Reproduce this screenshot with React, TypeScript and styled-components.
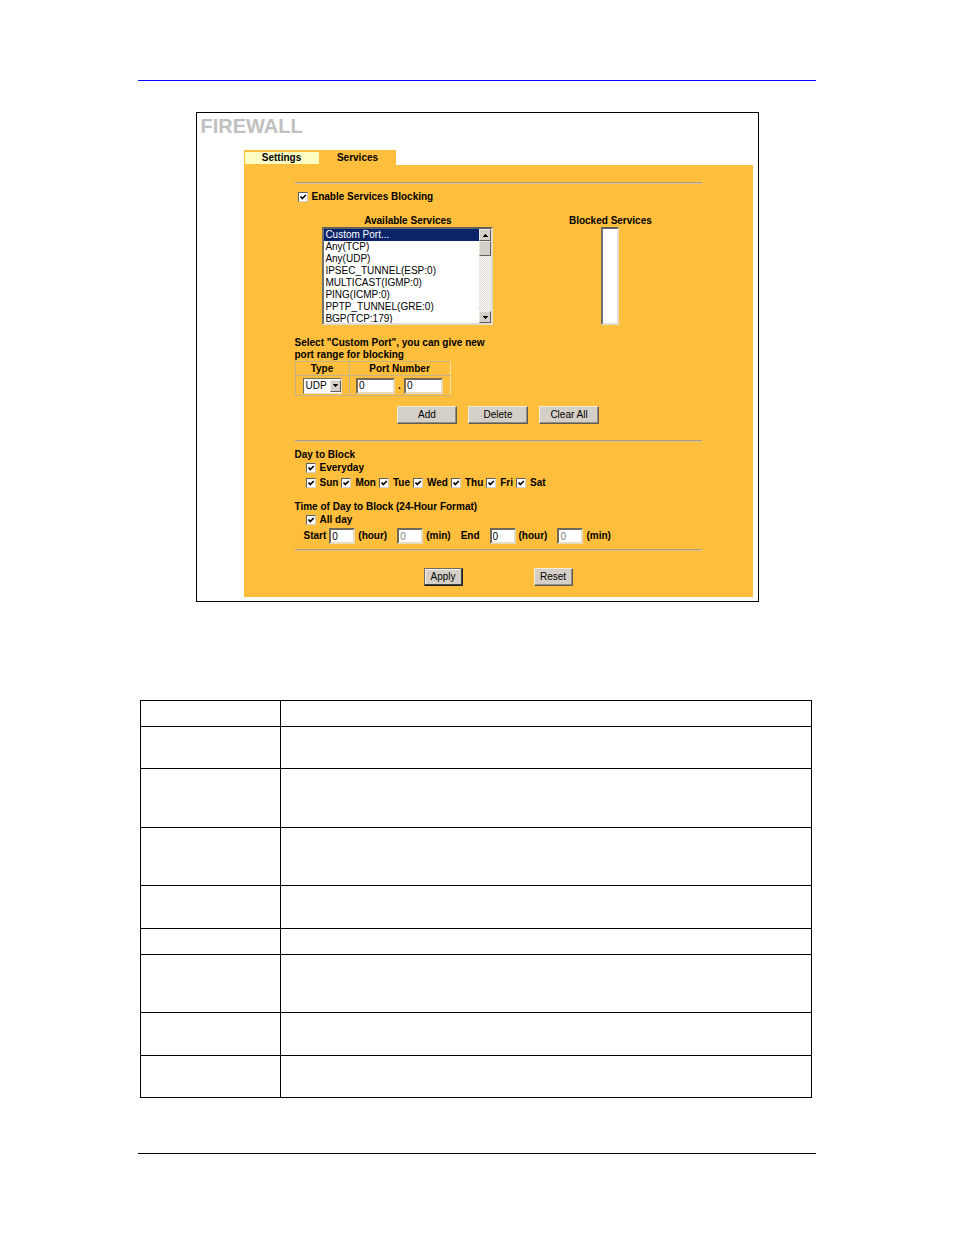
import React, { useState } from 'react';
import styled, { createGlobalStyle } from 'styled-components';

const GlobalStyle = createGlobalStyle`
  * {
    box-sizing: border-box;
  }

  body {
    margin: 0;
    background: #fff;
    color: #000;
    font-family: 'Liberation Sans', Arial, sans-serif;
    font-size: 10px;
    line-height: 12px;
  }

  button, input, select {
    font-family: inherit;
    font-size: 10px;
    line-height: 12px;
    color: #000;
    margin: 0;
    border-radius: 0;
  }
`;

const Page = styled.main`
  max-width: 678px;
  margin: 0 auto;
  padding: 80px 0;
`;

const PageRule = styled.hr<{ $color: string }>`
  height: 1px;
  margin: 0;
  border: none;
  background: ${({ $color }) => $color};
`;

const Frame = styled.section`
  max-width: 563px;
  margin: 31px auto 98px;
  padding: 1px 5px 4px 0;
  border: 1px solid #000;
`;

const Title = styled.h1`
  margin: 0 0 12px 4px;
  font-size: 20px;
  line-height: 24px;
  color: #c0c0c0;
`;

const Tabs = styled.nav`
  display: flex;
  margin-left: 47px;
`;

const Tab = styled.a<{ $active?: boolean }>`
  width: 76px;
  height: 15px;
  border: 1px solid #ffbe3c;
  border-top-width: 2px;
  background: ${({ $active }) => ($active ? '#ffbe3c' : '#ffffc4')};
  color: #000;
  font-weight: bold;
  text-align: center;
  text-decoration: none;
`;

const Panel = styled.form`
  margin-left: 47px;
  padding: 17px 51px 11px;
  background: #ffbe3c;
  font-weight: bold;
`;

const Divider = styled.hr`
  height: 2px;
  margin: 0;
  border: none;
  border-top: 1px solid #b09c78;
  border-bottom: 1px solid #dcc098;
`;

const EnableRow = styled.div`
  padding: 6px 0 11px 3px;
`;

const CheckLabel = styled.label`
  display: flex;
  align-items: center;
  gap: 4px;
  height: 14px;
`;

const CheckBox = styled.span`
  position: relative;
  width: 10px;
  height: 10px;

  input {
    display: block;
    appearance: none;
    width: 10px;
    height: 10px;
    background: #fff;
    border: 1px solid;
    border-color: #606060 #d4d0c8 #d4d0c8 #606060;
  }

  svg {
    position: absolute;
    inset: 0;
    pointer-events: none;
  }
`;

const Lists = styled.div`
  display: grid;
  grid-template-columns: 11fr 9fr;
  padding-left: 2px;
`;

const ListColumn = styled.div`
  display: flex;
  flex-direction: column;
  align-items: center;
`;

const ListBox = styled.div<{ $width: number }>`
  display: flex;
  width: ${({ $width }) => $width}px;
  height: 98px;
  border: 2px solid;
  border-color: #606060 #e0dcd0 #e0dcd0 #707070;
  background: #fff;
`;

const ListSelect = styled.select`
  flex: 1;
  min-width: 0;
  height: 94px;
  padding: 0;
  border: none;
  outline: none;
  background: #fff;
  overflow: hidden;
  scrollbar-width: none;

  option {
    height: 12px;
    min-height: 12px;
    padding: 0 1px;
    line-height: 12px;
    color: #000;
  }

  option:checked {
    background: #0a246a linear-gradient(#0a246a, #0a246a);
    color: #fff;
    -webkit-text-fill-color: #fff;
  }
`;

const ScrollBar = styled.div`
  display: flex;
  flex-direction: column;
  width: 12px;
  background: repeating-conic-gradient(#fff 0 25%, #dcd8d0 0 50%) 0 0 / 2px 2px;
`;

const ScrollButton = styled.button`
  display: flex;
  align-items: center;
  justify-content: center;
  height: 12px;
  padding: 0;
  border: 1px solid;
  border-color: #ece8e0 #606060 #606060 #ece8e0;
  background: #d4d0c8;
`;

const ScrollThumb = styled.div`
  height: 15px;
  margin-bottom: auto;
  border: 1px solid;
  border-color: #ece8e0 #606060 #606060 #ece8e0;
  background: #d4d0c8;
`;

const Hint = styled.p`
  width: 204px;
  margin: 12px 0 0;
`;

const PortTable = styled.table`
  width: 156px;
  border-collapse: collapse;

  th, td {
    padding: 0;
    border: 1px solid #c4b48c;
    text-align: center;
  }

  th:last-child, td:last-child {
    border-left-color: #f8e0a0;
    border-right-color: #f8e0a0;
  }

  th {
    height: 14px;
  }

  td {
    height: 20px;
  }
`;

const TypeHead = styled.th`
  width: 54px;
`;

const PortFields = styled.div`
  display: flex;
  align-items: center;
  justify-content: center;
  gap: 3px;
`;

const TextBox = styled.input<{ $width: number }>`
  width: ${({ $width }) => $width}px;
  height: 16px;
  padding: 0 1px;
  border: 2px solid;
  border-color: #706858 #e8dcc0 #e8dcc0 #706858;
  background: #fff;
  outline: none;

  &:disabled {
    color: #808080;
  }
`;

const DropDown = styled.div`
  position: relative;
  width: 39px;
  margin: 0 auto;

  select {
    display: block;
    appearance: none;
    width: 39px;
    height: 16px;
    padding: 0 0 0 2px;
    border: 1px solid;
    border-color: #706858 #e8dcc0 #e8dcc0 #706858;
    background: #fff;
  }
`;

const DropArrow = styled.span`
  position: absolute;
  top: 2px;
  right: 1px;
  display: flex;
  align-items: center;
  justify-content: center;
  width: 11px;
  height: 12px;
  border: 1px solid;
  border-color: #ece8e0 #606060 #606060 #ece8e0;
  background: #d4d0c8;
  pointer-events: none;
`;

const ButtonRow = styled.div<{ $gap: number; $top: number; $bottom?: number }>`
  display: flex;
  justify-content: center;
  gap: ${({ $gap }) => $gap}px;
  padding: ${({ $top, $bottom = 0 }) => `${$top}px 0 ${$bottom}px`};
`;

const Button = styled.button<{ $width: number; $default?: boolean }>`
  width: ${({ $width }) => $width}px;
  height: 18px;
  padding: 0;
  border: 1px solid;
  border-color: ${({ $default }) =>
    $default ? '#706c64 #202020 #202020 #706c64' : '#f4ecd8 #605c50 #605c50 #f4ecd8'};
  background: #d4d0c8;
  box-shadow: ${({ $default }) =>
    $default ? 'inset -1px -1px #404040, inset 1px 1px #f4f0e8' : 'inset -1px -1px #908c84'};
`;

const Schedule = styled.fieldset`
  display: flex;
  flex-direction: column;
  gap: 1px;
  min-width: 0;
  margin: 0;
  padding: 0;
  border: none;
`;

const ScheduleTitle = styled.legend`
  padding: 0;
`;

const Schedules = styled.div`
  display: flex;
  flex-direction: column;
  gap: 11px;
  padding: 7px 0 5px;
`;

const CheckRow = styled.div`
  display: flex;
  gap: 3px;
  padding-left: 11px;
`;

const TimeRow = styled.div`
  display: flex;
  gap: 10px;
  padding-left: 9px;
`;

const TimeField = styled.label<{ $wide?: boolean }>`
  display: flex;
  align-items: center;
  gap: ${({ $wide }) => ($wide ? '10px' : '3px')};
`;

const TimeEntry = styled.span`
  display: flex;
  align-items: center;
  gap: 3px;
`;

const DetailTable = styled.table`
  width: calc(100% - 6px);
  margin: 0 0 55px 2px;
  border-collapse: collapse;

  td {
    padding: 0;
    border: 1px solid #000;
  }

  td:first-child {
    width: 140px;
  }
`;

const DetailRow = styled.tr<{ $height: number }>`
  height: ${({ $height }) => $height}px;
`;

const services = [
  'Custom Port...',
  'Any(TCP)',
  'Any(UDP)',
  'IPSEC_TUNNEL(ESP:0)',
  'MULTICAST(IGMP:0)',
  'PING(ICMP:0)',
  'PPTP_TUNNEL(GRE:0)',
  'BGP(TCP:179)',
];

const days = ['Sun', 'Mon', 'Tue', 'Wed', 'Thu', 'Fri', 'Sat'];

const detailRows = [26, 42, 59, 58, 43, 26, 58, 43, 42];

const Arrow: React.FC<{ up?: boolean }> = ({ up }) => (
  <svg width="5" height="3" viewBox="0 0 5 3" shapeRendering="crispEdges">
    <path d={up ? 'M2 0h1v1h1v1h1v1H0V2h1V1h1z' : 'M0 0h5v1H4v1H3v1H2V2H1V1H0z'} fill="#000" />
  </svg>
);

const Check: React.FC<{ label: string }> = ({ label }) => {
  const [checked, setChecked] = useState(true);

  return (
    <CheckLabel>
      <CheckBox>
        <input type="checkbox" checked={checked} onChange={() => setChecked(!checked)} />
        {checked && (
          <svg width="10" height="10" viewBox="0 0 10 10">
            <path d="M2.5 4.5L4.3 6.5L7.8 3" fill="none" stroke="#000" strokeWidth="1.7" />
          </svg>
        )}
      </CheckBox>
      {label}
    </CheckLabel>
  );
};

const App: React.FC = () => {
  const [service, setService] = useState(services[0]);

  return (
    <>
      <GlobalStyle />
      <Page>
        <PageRule $color="#0000ff" />
        <Frame>
          <Title>FIREWALL</Title>
          <Tabs>
            <Tab href="#settings">Settings</Tab>
            <Tab href="#services" $active>Services</Tab>
          </Tabs>
          <Panel onSubmit={e => e.preventDefault()}>
            <Divider />
            <EnableRow>
              <Check label="Enable Services Blocking" />
            </EnableRow>
            <Lists>
              <ListColumn>
                <label htmlFor="available">Available Services</label>
                <ListBox $width={171}>
                  <ListSelect
                    id="available"
                    size={8}
                    value={service}
                    onChange={e => setService(e.target.value)}
                  >
                    {services.map(name => (
                      <option key={name}>{name}</option>
                    ))}
                  </ListSelect>
                  <ScrollBar>
                    <ScrollButton type="button" aria-label="Scroll up"><Arrow up /></ScrollButton>
                    <ScrollThumb />
                    <ScrollButton type="button" aria-label="Scroll down"><Arrow /></ScrollButton>
                  </ScrollBar>
                </ListBox>
              </ListColumn>
              <ListColumn>
                <label htmlFor="blocked">Blocked Services</label>
                <ListBox $width={18}>
                  <ListSelect id="blocked" size={8} />
                </ListBox>
              </ListColumn>
            </Lists>
            <Hint>Select "Custom Port", you can give new port range for blocking</Hint>
            <PortTable>
              <thead>
                <tr>
                  <TypeHead>Type</TypeHead>
                  <th>Port Number</th>
                </tr>
              </thead>
              <tbody>
                <tr>
                  <td>
                    <DropDown>
                      <select aria-label="Type">
                        <option>UDP</option>
                        <option>TCP</option>
                      </select>
                      <DropArrow><Arrow /></DropArrow>
                    </DropDown>
                  </td>
                  <td>
                    <PortFields>
                      <TextBox $width={39} defaultValue="0" aria-label="First port" />
                      .
                      <TextBox $width={39} defaultValue="0" aria-label="Last port" />
                    </PortFields>
                  </td>
                </tr>
              </tbody>
            </PortTable>
            <ButtonRow $gap={11} $top={10} $bottom={16}>
              <Button type="button" $width={60}>Add</Button>
              <Button type="button" $width={60}>Delete</Button>
              <Button type="button" $width={60}>Clear All</Button>
            </ButtonRow>
            <Divider />
            <Schedules>
              <Schedule>
                <ScheduleTitle>Day to Block</ScheduleTitle>
                <CheckRow>
                  <Check label="Everyday" />
                </CheckRow>
                <CheckRow>
                  {days.map(day => (
                    <Check key={day} label={day} />
                  ))}
                </CheckRow>
              </Schedule>
              <Schedule>
                <ScheduleTitle>Time of Day to Block (24-Hour Format)</ScheduleTitle>
                <CheckRow>
                  <Check label="All day" />
                </CheckRow>
                <TimeRow>
                  <TimeField>
                    Start
                    <TimeEntry>
                      <TextBox $width={26} defaultValue="0" />
                      (hour)
                    </TimeEntry>
                  </TimeField>
                  <TimeField>
                    <TextBox $width={26} defaultValue="0" disabled />
                    (min)
                  </TimeField>
                  <TimeField $wide>
                    End
                    <TimeEntry>
                      <TextBox $width={26} defaultValue="0" />
                      (hour)
                    </TimeEntry>
                  </TimeField>
                  <TimeField>
                    <TextBox $width={26} defaultValue="0" disabled />
                    (min)
                  </TimeField>
                </TimeRow>
              </Schedule>
            </Schedules>
            <Divider />
            <ButtonRow $gap={71} $top={17}>
              <Button type="submit" $width={39} $default>Apply</Button>
              <Button type="reset" $width={39}>Reset</Button>
            </ButtonRow>
          </Panel>
        </Frame>
        <DetailTable>
          <tbody>
            {detailRows.map((height, i) => (
              <DetailRow key={i} $height={height}>
                <td />
                <td />
              </DetailRow>
            ))}
          </tbody>
        </DetailTable>
        <PageRule $color="#000" />
      </Page>
    </>
  );
};

export default App;
